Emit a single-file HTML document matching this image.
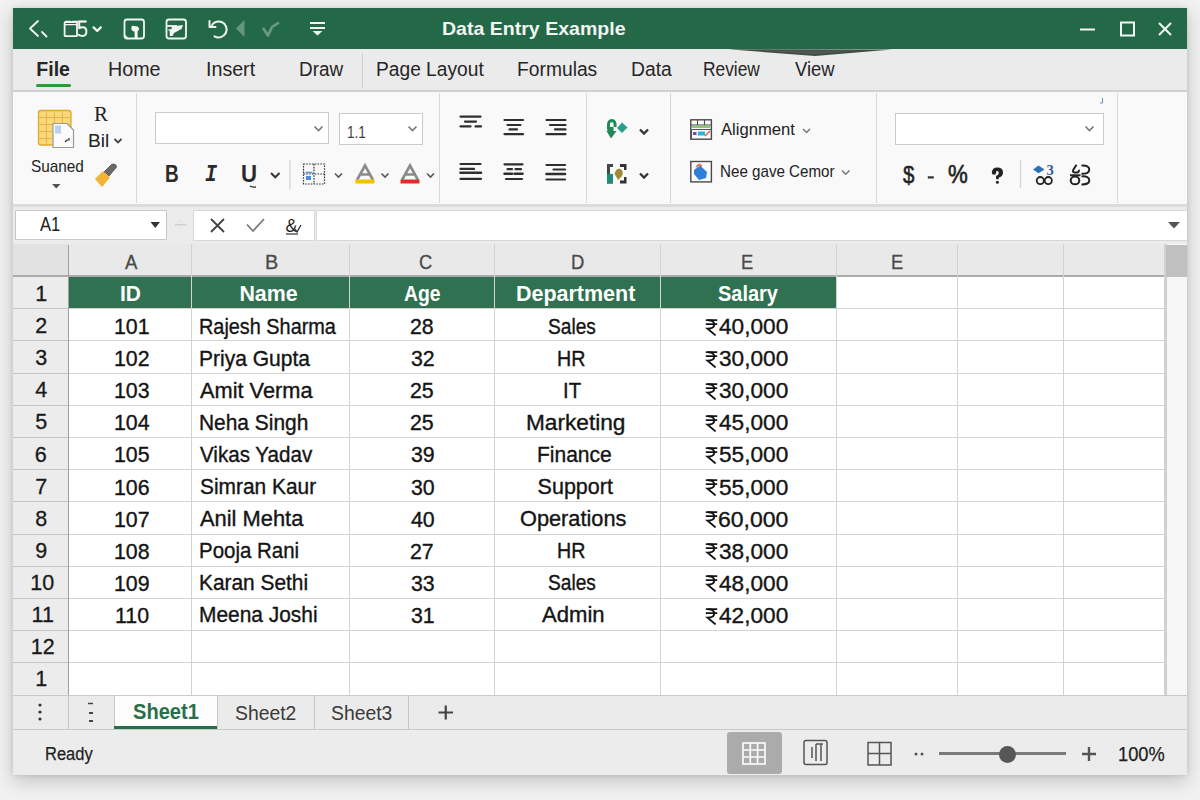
<!DOCTYPE html><html><head><meta charset="utf-8"><style>
*{margin:0;padding:0;box-sizing:border-box}
html,body{width:1200px;height:800px;overflow:hidden}
body{background:#f1f1f1;font-family:"Liberation Sans",sans-serif;position:relative;color:#1f1f1f}
.a{position:absolute}
.t{position:absolute;white-space:pre;line-height:1;transform-origin:0 0}
.sep{position:absolute;width:1px;background:#d8d8d8}
.box{position:absolute;background:#fff;border:1px solid #c4c4c4}
</style></head><body>
<div class="a" style="left:13px;top:8px;width:1174px;height:767px;background:#ececec;box-shadow:0 6px 18px rgba(0,0,0,0.20),0 0 5px rgba(0,0,0,0.10)"></div>
<div class="a" style="left:13px;top:8px;width:1174px;height:41px;background:#236948;"></div>
<div class="a" style="left:13px;top:49px;width:1174px;height:42px;background:#ebebeb;"></div>
<div class="a" style="left:13px;top:90px;width:1174px;height:1.5px;background:#d0d0d0;"></div>
<div class="a" style="left:36px;top:83.5px;width:35px;height:3.8px;background:#2c9c3a;border-radius:2px"></div>
<div class="sep" style="left:362px;top:53px;height:35px;background:#d0d0d0"></div>
<div class="a" style="left:13px;top:91.5px;width:1174px;height:113px;background:#f9f9f9;"></div>
<div class="a" style="left:13px;top:204px;width:1174px;height:3px;background:#dcdcdc;"></div>
<div class="sep" style="left:135.5px;top:93px;height:110px"></div>
<div class="sep" style="left:438.5px;top:93px;height:110px"></div>
<div class="sep" style="left:586.0px;top:93px;height:110px"></div>
<div class="sep" style="left:669.5px;top:93px;height:110px"></div>
<div class="sep" style="left:875.5px;top:93px;height:110px"></div>
<div class="sep" style="left:1117.0px;top:93px;height:110px"></div>
<div class="box" style="left:155px;top:112px;width:174px;height:32px;border-color:#cbcbcb"></div>
<div class="box" style="left:339px;top:113px;width:84px;height:32px;border-color:#cbcbcb"></div>
<div class="box" style="left:895px;top:112.5px;width:209px;height:32px;border-color:#cbcbcb"></div>
<div class="a" style="left:13px;top:207px;width:1174px;height:37px;background:#ececec;"></div>
<div class="box" style="left:15px;top:210px;width:152px;height:30px;border-color:#c8c8c8"></div>
<div class="box" style="left:193px;top:210px;width:122px;height:31px;border-color:#d8d8d8"></div>
<div class="box" style="left:316px;top:210px;width:871px;height:31px;border-color:#d8d8d8;border-right:none"></div>
<div class="a" style="left:13px;top:244px;width:1152px;height:451.1px;background:#ffffff;"></div>
<div class="a" style="left:13px;top:244px;width:1152px;height:32.5px;background:#e9e9e9;"></div>
<div class="a" style="left:13px;top:244px;width:55.5px;height:32.5px;background:#e2e2e2;"></div>
<div class="a" style="left:13px;top:276.5px;width:55.5px;height:418.6px;background:#ececec;"></div>
<div class="a" style="left:68.5px;top:276.5px;width:768.0px;height:32.7px;background:#2f7150;"></div>
<div class="a" style="left:13px;top:308px;width:1152px;height:1px;background:#d3d3d3;"></div>
<div class="a" style="left:13px;top:340px;width:1152px;height:1px;background:#d3d3d3;"></div>
<div class="a" style="left:13px;top:373px;width:1152px;height:1px;background:#d3d3d3;"></div>
<div class="a" style="left:13px;top:405px;width:1152px;height:1px;background:#d3d3d3;"></div>
<div class="a" style="left:13px;top:437px;width:1152px;height:1px;background:#d3d3d3;"></div>
<div class="a" style="left:13px;top:469px;width:1152px;height:1px;background:#d3d3d3;"></div>
<div class="a" style="left:13px;top:501px;width:1152px;height:1px;background:#d3d3d3;"></div>
<div class="a" style="left:13px;top:534px;width:1152px;height:1px;background:#d3d3d3;"></div>
<div class="a" style="left:13px;top:566px;width:1152px;height:1px;background:#d3d3d3;"></div>
<div class="a" style="left:13px;top:598px;width:1152px;height:1px;background:#d3d3d3;"></div>
<div class="a" style="left:13px;top:630px;width:1152px;height:1px;background:#d3d3d3;"></div>
<div class="a" style="left:13px;top:662px;width:1152px;height:1px;background:#d3d3d3;"></div>
<div class="a" style="left:13px;top:695px;width:1152px;height:1px;background:#d3d3d3;"></div>
<div class="a" style="left:13px;top:308px;width:55.5px;height:1px;background:#c4c4c4;"></div>
<div class="a" style="left:13px;top:340px;width:55.5px;height:1px;background:#c4c4c4;"></div>
<div class="a" style="left:13px;top:373px;width:55.5px;height:1px;background:#c4c4c4;"></div>
<div class="a" style="left:13px;top:405px;width:55.5px;height:1px;background:#c4c4c4;"></div>
<div class="a" style="left:13px;top:437px;width:55.5px;height:1px;background:#c4c4c4;"></div>
<div class="a" style="left:13px;top:469px;width:55.5px;height:1px;background:#c4c4c4;"></div>
<div class="a" style="left:13px;top:501px;width:55.5px;height:1px;background:#c4c4c4;"></div>
<div class="a" style="left:13px;top:534px;width:55.5px;height:1px;background:#c4c4c4;"></div>
<div class="a" style="left:13px;top:566px;width:55.5px;height:1px;background:#c4c4c4;"></div>
<div class="a" style="left:13px;top:598px;width:55.5px;height:1px;background:#c4c4c4;"></div>
<div class="a" style="left:13px;top:630px;width:55.5px;height:1px;background:#c4c4c4;"></div>
<div class="a" style="left:13px;top:662px;width:55.5px;height:1px;background:#c4c4c4;"></div>
<div class="a" style="left:13px;top:695px;width:55.5px;height:1px;background:#c4c4c4;"></div>
<div class="a" style="left:13px;top:275.0px;width:1152px;height:1.5px;background:#ababab;"></div>
<div class="a" style="left:191px;top:244px;width:1px;height:451.1px;background:#d3d3d3;"></div>
<div class="a" style="left:349px;top:244px;width:1px;height:451.1px;background:#d3d3d3;"></div>
<div class="a" style="left:494px;top:244px;width:1px;height:451.1px;background:#d3d3d3;"></div>
<div class="a" style="left:660px;top:244px;width:1px;height:451.1px;background:#d3d3d3;"></div>
<div class="a" style="left:836px;top:244px;width:1px;height:451.1px;background:#d3d3d3;"></div>
<div class="a" style="left:957px;top:244px;width:1px;height:451.1px;background:#d3d3d3;"></div>
<div class="a" style="left:1063px;top:244px;width:1px;height:451.1px;background:#d3d3d3;"></div>
<div class="a" style="left:1164px;top:244px;width:1px;height:451.1px;background:#d3d3d3;"></div>
<div class="a" style="left:68px;top:245px;width:1px;height:450.1px;background:#a0a0a0;"></div>
<svg class="a" style="left:705px;top:318.8px" width="13" height="17" viewBox="0 0 13 17"><path d="M0.8 1.2 H12.2 M0.8 5.2 H12.2" stroke="#141414" stroke-width="1.7" fill="none"/><path d="M3.2 1.2 Q9.2 1.2 9.2 5.4 Q9.2 9.6 2.6 9.6 L10.6 16.4" stroke="#141414" stroke-width="1.9" fill="none"/></svg>
<svg class="a" style="left:705px;top:350.9px" width="13" height="17" viewBox="0 0 13 17"><path d="M0.8 1.2 H12.2 M0.8 5.2 H12.2" stroke="#141414" stroke-width="1.7" fill="none"/><path d="M3.2 1.2 Q9.2 1.2 9.2 5.4 Q9.2 9.6 2.6 9.6 L10.6 16.4" stroke="#141414" stroke-width="1.9" fill="none"/></svg>
<svg class="a" style="left:705px;top:383.0px" width="13" height="17" viewBox="0 0 13 17"><path d="M0.8 1.2 H12.2 M0.8 5.2 H12.2" stroke="#141414" stroke-width="1.7" fill="none"/><path d="M3.2 1.2 Q9.2 1.2 9.2 5.4 Q9.2 9.6 2.6 9.6 L10.6 16.4" stroke="#141414" stroke-width="1.9" fill="none"/></svg>
<svg class="a" style="left:705px;top:415.0px" width="13" height="17" viewBox="0 0 13 17"><path d="M0.8 1.2 H12.2 M0.8 5.2 H12.2" stroke="#141414" stroke-width="1.7" fill="none"/><path d="M3.2 1.2 Q9.2 1.2 9.2 5.4 Q9.2 9.6 2.6 9.6 L10.6 16.4" stroke="#141414" stroke-width="1.9" fill="none"/></svg>
<svg class="a" style="left:705px;top:447.1px" width="13" height="17" viewBox="0 0 13 17"><path d="M0.8 1.2 H12.2 M0.8 5.2 H12.2" stroke="#141414" stroke-width="1.7" fill="none"/><path d="M3.2 1.2 Q9.2 1.2 9.2 5.4 Q9.2 9.6 2.6 9.6 L10.6 16.4" stroke="#141414" stroke-width="1.9" fill="none"/></svg>
<svg class="a" style="left:705px;top:479.2px" width="13" height="17" viewBox="0 0 13 17"><path d="M0.8 1.2 H12.2 M0.8 5.2 H12.2" stroke="#141414" stroke-width="1.7" fill="none"/><path d="M3.2 1.2 Q9.2 1.2 9.2 5.4 Q9.2 9.6 2.6 9.6 L10.6 16.4" stroke="#141414" stroke-width="1.9" fill="none"/></svg>
<svg class="a" style="left:705px;top:511.3px" width="13" height="17" viewBox="0 0 13 17"><path d="M0.8 1.2 H12.2 M0.8 5.2 H12.2" stroke="#141414" stroke-width="1.7" fill="none"/><path d="M3.2 1.2 Q9.2 1.2 9.2 5.4 Q9.2 9.6 2.6 9.6 L10.6 16.4" stroke="#141414" stroke-width="1.9" fill="none"/></svg>
<svg class="a" style="left:705px;top:543.4px" width="13" height="17" viewBox="0 0 13 17"><path d="M0.8 1.2 H12.2 M0.8 5.2 H12.2" stroke="#141414" stroke-width="1.7" fill="none"/><path d="M3.2 1.2 Q9.2 1.2 9.2 5.4 Q9.2 9.6 2.6 9.6 L10.6 16.4" stroke="#141414" stroke-width="1.9" fill="none"/></svg>
<svg class="a" style="left:705px;top:575.4px" width="13" height="17" viewBox="0 0 13 17"><path d="M0.8 1.2 H12.2 M0.8 5.2 H12.2" stroke="#141414" stroke-width="1.7" fill="none"/><path d="M3.2 1.2 Q9.2 1.2 9.2 5.4 Q9.2 9.6 2.6 9.6 L10.6 16.4" stroke="#141414" stroke-width="1.9" fill="none"/></svg>
<svg class="a" style="left:705px;top:607.5px" width="13" height="17" viewBox="0 0 13 17"><path d="M0.8 1.2 H12.2 M0.8 5.2 H12.2" stroke="#141414" stroke-width="1.7" fill="none"/><path d="M3.2 1.2 Q9.2 1.2 9.2 5.4 Q9.2 9.6 2.6 9.6 L10.6 16.4" stroke="#141414" stroke-width="1.9" fill="none"/></svg>
<div class="a" style="left:1165px;top:244px;width:22px;height:451.1px;background:#f6f6f6;border-left:2px solid #d0d0d0"></div>
<div class="a" style="left:1166px;top:245px;width:21px;height:32px;background:#c0c0c0;"></div>
<div class="a" style="left:13px;top:694.5px;width:1174px;height:34.5px;background:#ebebeb;"></div>
<div class="a" style="left:13px;top:694.5px;width:1174px;height:1.2px;background:#c9c9c9;"></div>
<div class="a" style="left:13px;top:728.5px;width:1174px;height:1.2px;background:#c9c9c9;"></div>
<div class="a" style="left:114px;top:695.5px;width:103px;height:33px;background:#fdfdfd;"></div>
<div class="sep" style="left:68.3px;top:695px;height:34px;background:#c6c6c6"></div>
<div class="sep" style="left:113.5px;top:695px;height:34px;background:#c6c6c6"></div>
<div class="sep" style="left:217.0px;top:695px;height:34px;background:#c6c6c6"></div>
<div class="sep" style="left:314.1px;top:695px;height:34px;background:#c6c6c6"></div>
<div class="sep" style="left:408.25px;top:695px;height:34px;background:#c6c6c6"></div>
<div class="a" style="left:114px;top:725.8px;width:103px;height:3.4px;background:#24704a;"></div>
<path/>
<div class="a" style="left:727px;top:732px;width:55px;height:42px;background:#ababab;border-radius:3px"></div>
<div class="a" style="left:939px;top:752px;width:127px;height:3px;background:#7a7a7a;"></div>
<div class="a" style="left:998.5px;top:746px;width:17px;height:17px;border-radius:50%;background:#575757"></div>
<div class="t" style="left:441.55px;top:19.65px;font:normal 700 18.6px 'Liberation Sans';line-height:1;color:#f2f5f2;transform:scaleX(1.0508);">Data Entry Example</div>
<div class="t" style="left:36.30px;top:60.19px;font:normal 700 19.5px 'Liberation Sans';line-height:1;color:#262626;">File</div>
<div class="t" style="left:108.29px;top:60.19px;font:normal 400 19.5px 'Liberation Sans';line-height:1;color:#262626;transform:scaleX(1.0105);">Home</div>
<div class="t" style="left:206.29px;top:60.19px;font:normal 400 19.5px 'Liberation Sans';line-height:1;color:#262626;transform:scaleX(1.0072);">Insert</div>
<div class="t" style="left:299.03px;top:60.19px;font:normal 400 19.5px 'Liberation Sans';line-height:1;color:#262626;transform:scaleX(0.9687);">Draw</div>
<div class="t" style="left:375.72px;top:60.19px;font:normal 400 19.5px 'Liberation Sans';line-height:1;color:#262626;transform:scaleX(0.9836);">Page Layout</div>
<div class="t" style="left:517.01px;top:60.19px;font:normal 400 19.5px 'Liberation Sans';line-height:1;color:#262626;transform:scaleX(0.9874);">Formulas</div>
<div class="t" style="left:630.71px;top:60.19px;font:normal 400 19.5px 'Liberation Sans';line-height:1;color:#262626;transform:scaleX(0.9914);">Data</div>
<div class="t" style="left:703.11px;top:60.19px;font:normal 400 19.5px 'Liberation Sans';line-height:1;color:#262626;transform:scaleX(0.8895);">Review</div>
<div class="t" style="left:795.40px;top:60.19px;font:normal 400 19.5px 'Liberation Sans';line-height:1;color:#262626;transform:scaleX(0.9432);">View</div>
<div class="t" style="left:87.99px;top:130.71px;font:normal 400 19px 'Liberation Sans';line-height:1;color:#222;transform:scaleX(1.0056);">Bil</div>
<div class="t" style="left:30.50px;top:158.51px;font:normal 400 15.7px 'Liberation Sans';line-height:1;color:#222;transform:scaleX(0.9782);">Suaned</div>
<div class="t" style="left:347.17px;top:123.61px;font:normal 400 16.4px 'Liberation Sans';line-height:1;color:#444;transform:scaleX(0.8307);">1.1</div>
<div class="t" style="left:165.20px;top:161.85px;font:normal 700 23.8px 'Liberation Sans';line-height:1;color:#2a2a2a;transform:scaleX(0.7969);">B</div>
<div class="t" style="left:204.75px;top:164.37px;font:italic 700 23px 'Liberation Mono';line-height:1;color:#2a2a2a;transform:scaleX(0.8750);">I</div>
<div class="t" style="left:241.07px;top:161.85px;font:normal 700 23.8px 'Liberation Sans';line-height:1;color:#2a2a2a;transform:scaleX(0.9333);">U</div>
<div class="t" style="left:721.00px;top:121.02px;font:normal 400 17.4px 'Liberation Sans';line-height:1;color:#222;transform:scaleX(0.9548);">Alignment</div>
<div class="t" style="left:720.11px;top:163.10px;font:normal 400 17px 'Liberation Sans';line-height:1;color:#222;transform:scaleX(0.8917);">Nee gave Cemor</div>
<div class="t" style="left:902.70px;top:163.18px;font:normal 400 24px 'Liberation Sans';line-height:1;color:#222;transform:scaleX(0.8538);-webkit-text-stroke:0.5px #222">$</div>
<div class="t" style="left:948.00px;top:162.03px;font:normal 400 25px 'Liberation Sans';line-height:1;color:#222;transform:scaleX(0.8909);-webkit-text-stroke:0.6px #222">%</div>
<div class="t" style="left:39.75px;top:214.65px;font:normal 400 19.6px 'Liberation Sans';line-height:1;color:#222;transform:scaleX(0.8453);">A1</div>
<div class="t" style="left:125.00px;top:251.56px;font:normal 400 20px 'Liberation Sans';line-height:1;color:#4a4a4a;transform:scaleX(0.9286);-webkit-text-stroke:0.3px #4a4a4a">A</div>
<div class="t" style="left:264.71px;top:251.56px;font:normal 400 20px 'Liberation Sans';line-height:1;color:#4a4a4a;transform:scaleX(0.9917);-webkit-text-stroke:0.3px #4a4a4a">B</div>
<div class="t" style="left:418.88px;top:251.56px;font:normal 400 20px 'Liberation Sans';line-height:1;color:#4a4a4a;transform:scaleX(0.9154);-webkit-text-stroke:0.3px #4a4a4a">C</div>
<div class="t" style="left:571.08px;top:251.56px;font:normal 400 20px 'Liberation Sans';line-height:1;color:#4a4a4a;transform:scaleX(0.9231);-webkit-text-stroke:0.3px #4a4a4a">D</div>
<div class="t" style="left:741.08px;top:251.56px;font:normal 400 20px 'Liberation Sans';line-height:1;color:#4a4a4a;transform:scaleX(0.9167);-webkit-text-stroke:0.3px #4a4a4a">E</div>
<div class="t" style="left:891.08px;top:251.56px;font:normal 400 20px 'Liberation Sans';line-height:1;color:#4a4a4a;transform:scaleX(0.9167);-webkit-text-stroke:0.3px #4a4a4a">E</div>
<div class="t" style="left:35.25px;top:284.09px;font:normal 400 21.5px 'Liberation Sans';line-height:1;color:#1a1a1a;-webkit-text-stroke:0.3px #1a1a1a">1</div>
<div class="t" style="left:35.25px;top:316.19px;font:normal 400 21.5px 'Liberation Sans';line-height:1;color:#1a1a1a;-webkit-text-stroke:0.3px #1a1a1a">2</div>
<div class="t" style="left:35.25px;top:348.29px;font:normal 400 21.5px 'Liberation Sans';line-height:1;color:#1a1a1a;-webkit-text-stroke:0.3px #1a1a1a">3</div>
<div class="t" style="left:35.25px;top:380.39px;font:normal 400 21.5px 'Liberation Sans';line-height:1;color:#1a1a1a;-webkit-text-stroke:0.3px #1a1a1a">4</div>
<div class="t" style="left:35.25px;top:412.49px;font:normal 400 21.5px 'Liberation Sans';line-height:1;color:#1a1a1a;-webkit-text-stroke:0.3px #1a1a1a">5</div>
<div class="t" style="left:34.75px;top:444.59px;font:normal 400 21.5px 'Liberation Sans';line-height:1;color:#1a1a1a;-webkit-text-stroke:0.3px #1a1a1a">6</div>
<div class="t" style="left:35.25px;top:476.69px;font:normal 400 21.5px 'Liberation Sans';line-height:1;color:#1a1a1a;-webkit-text-stroke:0.3px #1a1a1a">7</div>
<div class="t" style="left:35.25px;top:508.79px;font:normal 400 21.5px 'Liberation Sans';line-height:1;color:#1a1a1a;-webkit-text-stroke:0.3px #1a1a1a">8</div>
<div class="t" style="left:35.25px;top:540.89px;font:normal 400 21.5px 'Liberation Sans';line-height:1;color:#1a1a1a;-webkit-text-stroke:0.3px #1a1a1a">9</div>
<div class="t" style="left:30.27px;top:572.99px;font:normal 400 21.5px 'Liberation Sans';line-height:1;color:#1a1a1a;-webkit-text-stroke:0.3px #1a1a1a">10</div>
<div class="t" style="left:31.57px;top:605.09px;font:normal 400 21.5px 'Liberation Sans';line-height:1;color:#1a1a1a;-webkit-text-stroke:0.3px #1a1a1a">11</div>
<div class="t" style="left:30.77px;top:637.19px;font:normal 400 21.5px 'Liberation Sans';line-height:1;color:#1a1a1a;-webkit-text-stroke:0.3px #1a1a1a">12</div>
<div class="t" style="left:35.25px;top:669.29px;font:normal 400 21.5px 'Liberation Sans';line-height:1;color:#1a1a1a;-webkit-text-stroke:0.3px #1a1a1a">1</div>
<div class="t" style="left:119.52px;top:284.18px;font:normal 700 21.4px 'Liberation Sans';line-height:1;color:#ffffff;transform:scaleX(0.9778);">ID</div>
<div class="t" style="left:239.40px;top:284.18px;font:normal 700 21.4px 'Liberation Sans';line-height:1;color:#ffffff;">Name</div>
<div class="t" style="left:403.60px;top:284.18px;font:normal 700 21.4px 'Liberation Sans';line-height:1;color:#ffffff;transform:scaleX(0.9059);">Age</div>
<div class="t" style="left:516.40px;top:284.18px;font:normal 700 21.4px 'Liberation Sans';line-height:1;color:#ffffff;transform:scaleX(1.0039);">Department</div>
<div class="t" style="left:718.00px;top:284.18px;font:normal 700 21.4px 'Liberation Sans';line-height:1;color:#ffffff;transform:scaleX(0.9327);">Salary</div>
<div class="t" style="left:113.83px;top:316.17px;font:normal 400 22px 'Liberation Sans';line-height:1;color:#141414;transform:scaleX(0.9700);-webkit-text-stroke:0.35px #141414">101</div>
<div class="t" style="left:198.68px;top:316.59px;font:normal 400 21.5px 'Liberation Sans';line-height:1;color:#141414;transform:scaleX(0.9238);-webkit-text-stroke:0.35px #141414">Rajesh Sharma</div>
<div class="t" style="left:410.36px;top:316.17px;font:normal 400 22px 'Liberation Sans';line-height:1;color:#141414;transform:scaleX(0.9700);-webkit-text-stroke:0.35px #141414">28</div>
<div class="t" style="left:548.40px;top:316.59px;font:normal 400 21.5px 'Liberation Sans';line-height:1;color:#141414;transform:scaleX(0.8900);-webkit-text-stroke:0.35px #141414">Sales</div>
<div class="t" style="left:719.00px;top:316.17px;font:normal 400 22px 'Liberation Sans';line-height:1;color:#141414;transform:scaleX(1.0290);-webkit-text-stroke:0.35px #141414">40,000</div>
<div class="t" style="left:113.83px;top:348.25px;font:normal 400 22px 'Liberation Sans';line-height:1;color:#141414;transform:scaleX(0.9700);-webkit-text-stroke:0.35px #141414">102</div>
<div class="t" style="left:198.62px;top:348.67px;font:normal 400 21.5px 'Liberation Sans';line-height:1;color:#141414;transform:scaleX(0.9772);-webkit-text-stroke:0.35px #141414">Priya Gupta</div>
<div class="t" style="left:410.85px;top:348.25px;font:normal 400 22px 'Liberation Sans';line-height:1;color:#141414;transform:scaleX(0.9700);-webkit-text-stroke:0.35px #141414">32</div>
<div class="t" style="left:557.09px;top:348.67px;font:normal 400 21.5px 'Liberation Sans';line-height:1;color:#141414;transform:scaleX(0.9144);-webkit-text-stroke:0.35px #141414">HR</div>
<div class="t" style="left:719.00px;top:348.25px;font:normal 400 22px 'Liberation Sans';line-height:1;color:#141414;transform:scaleX(1.0290);-webkit-text-stroke:0.35px #141414">30,000</div>
<div class="t" style="left:113.83px;top:380.33px;font:normal 400 22px 'Liberation Sans';line-height:1;color:#141414;transform:scaleX(0.9700);-webkit-text-stroke:0.35px #141414">103</div>
<div class="t" style="left:199.60px;top:380.75px;font:normal 400 21.5px 'Liberation Sans';line-height:1;color:#141414;transform:scaleX(1.0130);-webkit-text-stroke:0.35px #141414">Amit Verma</div>
<div class="t" style="left:410.36px;top:380.33px;font:normal 400 22px 'Liberation Sans';line-height:1;color:#141414;transform:scaleX(0.9700);-webkit-text-stroke:0.35px #141414">25</div>
<div class="t" style="left:563.05px;top:380.75px;font:normal 400 21.5px 'Liberation Sans';line-height:1;color:#141414;transform:scaleX(0.9458);-webkit-text-stroke:0.35px #141414">IT</div>
<div class="t" style="left:719.00px;top:380.33px;font:normal 400 22px 'Liberation Sans';line-height:1;color:#141414;transform:scaleX(1.0290);-webkit-text-stroke:0.35px #141414">30,000</div>
<div class="t" style="left:113.83px;top:412.41px;font:normal 400 22px 'Liberation Sans';line-height:1;color:#141414;transform:scaleX(0.9700);-webkit-text-stroke:0.35px #141414">104</div>
<div class="t" style="left:198.63px;top:412.83px;font:normal 400 21.5px 'Liberation Sans';line-height:1;color:#141414;transform:scaleX(0.9728);-webkit-text-stroke:0.35px #141414">Neha Singh</div>
<div class="t" style="left:410.36px;top:412.41px;font:normal 400 22px 'Liberation Sans';line-height:1;color:#141414;transform:scaleX(0.9700);-webkit-text-stroke:0.35px #141414">25</div>
<div class="t" style="left:525.95px;top:412.83px;font:normal 400 21.5px 'Liberation Sans';line-height:1;color:#141414;transform:scaleX(1.0536);-webkit-text-stroke:0.35px #141414">Marketing</div>
<div class="t" style="left:719.00px;top:412.41px;font:normal 400 22px 'Liberation Sans';line-height:1;color:#141414;transform:scaleX(1.0290);-webkit-text-stroke:0.35px #141414">45,000</div>
<div class="t" style="left:113.83px;top:444.49px;font:normal 400 22px 'Liberation Sans';line-height:1;color:#141414;transform:scaleX(0.9700);-webkit-text-stroke:0.35px #141414">105</div>
<div class="t" style="left:199.60px;top:444.91px;font:normal 400 21.5px 'Liberation Sans';line-height:1;color:#141414;transform:scaleX(0.9578);-webkit-text-stroke:0.35px #141414">Vikas Yadav</div>
<div class="t" style="left:410.85px;top:444.49px;font:normal 400 22px 'Liberation Sans';line-height:1;color:#141414;transform:scaleX(0.9700);-webkit-text-stroke:0.35px #141414">39</div>
<div class="t" style="left:536.62px;top:444.91px;font:normal 400 21.5px 'Liberation Sans';line-height:1;color:#141414;transform:scaleX(0.9768);-webkit-text-stroke:0.35px #141414">Finance</div>
<div class="t" style="left:719.00px;top:444.49px;font:normal 400 22px 'Liberation Sans';line-height:1;color:#141414;transform:scaleX(1.0290);-webkit-text-stroke:0.35px #141414">55,000</div>
<div class="t" style="left:113.83px;top:476.57px;font:normal 400 22px 'Liberation Sans';line-height:1;color:#141414;transform:scaleX(0.9700);-webkit-text-stroke:0.35px #141414">106</div>
<div class="t" style="left:199.60px;top:476.99px;font:normal 400 21.5px 'Liberation Sans';line-height:1;color:#141414;transform:scaleX(0.9721);-webkit-text-stroke:0.35px #141414">Simran Kaur</div>
<div class="t" style="left:410.85px;top:476.57px;font:normal 400 22px 'Liberation Sans';line-height:1;color:#141414;transform:scaleX(0.9700);-webkit-text-stroke:0.35px #141414">30</div>
<div class="t" style="left:537.60px;top:476.99px;font:normal 400 21.5px 'Liberation Sans';line-height:1;color:#141414;-webkit-text-stroke:0.35px #141414">Support</div>
<div class="t" style="left:719.00px;top:476.57px;font:normal 400 22px 'Liberation Sans';line-height:1;color:#141414;transform:scaleX(1.0290);-webkit-text-stroke:0.35px #141414">55,000</div>
<div class="t" style="left:113.83px;top:508.65px;font:normal 400 22px 'Liberation Sans';line-height:1;color:#141414;transform:scaleX(0.9700);-webkit-text-stroke:0.35px #141414">107</div>
<div class="t" style="left:199.60px;top:509.07px;font:normal 400 21.5px 'Liberation Sans';line-height:1;color:#141414;transform:scaleX(1.0175);-webkit-text-stroke:0.35px #141414">Anil Mehta</div>
<div class="t" style="left:410.85px;top:508.65px;font:normal 400 22px 'Liberation Sans';line-height:1;color:#141414;transform:scaleX(0.9700);-webkit-text-stroke:0.35px #141414">40</div>
<div class="t" style="left:519.99px;top:509.07px;font:normal 400 21.5px 'Liberation Sans';line-height:1;color:#141414;transform:scaleX(1.0114);-webkit-text-stroke:0.35px #141414">Operations</div>
<div class="t" style="left:717.96px;top:508.65px;font:normal 400 22px 'Liberation Sans';line-height:1;color:#141414;transform:scaleX(1.0446);-webkit-text-stroke:0.35px #141414">60,000</div>
<div class="t" style="left:113.83px;top:540.73px;font:normal 400 22px 'Liberation Sans';line-height:1;color:#141414;transform:scaleX(0.9700);-webkit-text-stroke:0.35px #141414">108</div>
<div class="t" style="left:198.65px;top:541.15px;font:normal 400 21.5px 'Liberation Sans';line-height:1;color:#141414;transform:scaleX(0.9516);-webkit-text-stroke:0.35px #141414">Pooja Rani</div>
<div class="t" style="left:410.36px;top:540.73px;font:normal 400 22px 'Liberation Sans';line-height:1;color:#141414;transform:scaleX(0.9700);-webkit-text-stroke:0.35px #141414">27</div>
<div class="t" style="left:557.09px;top:541.15px;font:normal 400 21.5px 'Liberation Sans';line-height:1;color:#141414;transform:scaleX(0.9144);-webkit-text-stroke:0.35px #141414">HR</div>
<div class="t" style="left:719.00px;top:540.73px;font:normal 400 22px 'Liberation Sans';line-height:1;color:#141414;transform:scaleX(1.0290);-webkit-text-stroke:0.35px #141414">38,000</div>
<div class="t" style="left:113.83px;top:572.81px;font:normal 400 22px 'Liberation Sans';line-height:1;color:#141414;transform:scaleX(0.9700);-webkit-text-stroke:0.35px #141414">109</div>
<div class="t" style="left:198.63px;top:573.23px;font:normal 400 21.5px 'Liberation Sans';line-height:1;color:#141414;transform:scaleX(0.9713);-webkit-text-stroke:0.35px #141414">Karan Sethi</div>
<div class="t" style="left:410.85px;top:572.81px;font:normal 400 22px 'Liberation Sans';line-height:1;color:#141414;transform:scaleX(0.9700);-webkit-text-stroke:0.35px #141414">33</div>
<div class="t" style="left:548.40px;top:573.23px;font:normal 400 21.5px 'Liberation Sans';line-height:1;color:#141414;transform:scaleX(0.8900);-webkit-text-stroke:0.35px #141414">Sales</div>
<div class="t" style="left:719.00px;top:572.81px;font:normal 400 22px 'Liberation Sans';line-height:1;color:#141414;transform:scaleX(1.0290);-webkit-text-stroke:0.35px #141414">48,000</div>
<div class="t" style="left:114.62px;top:604.89px;font:normal 400 22px 'Liberation Sans';line-height:1;color:#141414;transform:scaleX(0.9700);-webkit-text-stroke:0.35px #141414">110</div>
<div class="t" style="left:198.63px;top:605.31px;font:normal 400 21.5px 'Liberation Sans';line-height:1;color:#141414;transform:scaleX(0.9723);-webkit-text-stroke:0.35px #141414">Meena Joshi</div>
<div class="t" style="left:410.85px;top:604.89px;font:normal 400 22px 'Liberation Sans';line-height:1;color:#141414;transform:scaleX(0.9700);-webkit-text-stroke:0.35px #141414">31</div>
<div class="t" style="left:542.40px;top:605.31px;font:normal 400 21.5px 'Liberation Sans';line-height:1;color:#141414;transform:scaleX(1.0269);-webkit-text-stroke:0.35px #141414">Admin</div>
<div class="t" style="left:719.00px;top:604.89px;font:normal 400 22px 'Liberation Sans';line-height:1;color:#141414;transform:scaleX(1.0290);-webkit-text-stroke:0.35px #141414">42,000</div>
<div class="t" style="left:132.70px;top:701.37px;font:normal 700 22px 'Liberation Sans';line-height:1;color:#277049;transform:scaleX(0.9123);">Sheet1</div>
<div class="t" style="left:235.20px;top:703.01px;font:normal 400 20.3px 'Liberation Sans';line-height:1;color:#393939;transform:scaleX(0.9539);">Sheet2</div>
<div class="t" style="left:331.00px;top:703.01px;font:normal 400 20.3px 'Liberation Sans';line-height:1;color:#393939;transform:scaleX(0.9531);">Sheet3</div>
<div class="t" style="left:44.83px;top:744.70px;font:normal 400 18.9px 'Liberation Sans';line-height:1;color:#1e1e1e;transform:scaleX(0.8733);-webkit-text-stroke:0.25px #1e1e1e">Ready</div>
<div class="t" style="left:1118.07px;top:744.62px;font:normal 400 19.7px 'Liberation Sans';line-height:1;color:#1e1e1e;transform:scaleX(0.9274);-webkit-text-stroke:0.25px #1e1e1e">100%</div>
<svg class="a" style="left:0;top:0" width="1200" height="800" viewBox="0 0 1200 800"><g fill="none" stroke="#f3f6f3" stroke-width="1.8" stroke-linecap="round" stroke-linejoin="round">
<path d="M38 21 L30 28.5 L38 36"/><path d="M42 32 L46.5 36.5"/>
<rect x="64.6" y="22.2" width="12.4" height="14" rx="0.8"/><path d="M64.6 24.6 H77" stroke-width="1.3"/><path d="M65.5 21.6 H70.5 M72.5 21.6 H85.8" stroke-width="1.5"/>
<path d="M85.8 21.6 H79.2 V28.2 Q80.3 27.2 82.6 27.2 Q86.4 27.2 86.4 31.5 Q86.4 35.9 82.4 35.9 Q80.2 35.9 78.6 34.9" stroke-width="2"/>
<path d="M93.6 27.4 L97.2 31 L100.8 27.4" stroke-width="2.3"/>
<rect x="124.5" y="19.5" width="19.5" height="19" rx="2.5"/>
<path d="M125 36 L127 38"/>
</g>
<path d="M131.4 27.2 Q131.8 25.6 134.2 25.9 L137.6 26.4 Q139.4 27.4 139 30 L137.6 31.2 V38.4 H134.6 V31.6 Q131.4 31.2 131.4 28.6 Z" fill="#f3f6f3"/>
<g fill="none" stroke="#f3f6f3" stroke-width="1.8" stroke-linejoin="round"><rect x="166.5" y="19.5" width="19.5" height="19" rx="2.5"/><path d="M167 26 H177"/></g>
<path d="M172 26.5 L183 25 L181.5 29 L174 33 L172.5 36 L170.5 36 L171 31.5 Z" fill="#f3f6f3"/><path d="M168.5 30 H173 M170.5 30 V36" stroke="#f3f6f3" stroke-width="1.5" fill="none"/>
<g fill="none" stroke="#f3f6f3" stroke-width="2" stroke-linecap="round" stroke-linejoin="round"><path d="M211 27 A8 8 0 1 1 214.5 36.3"/><path d="M209.5 21 V27 H215.5"/></g>
<path d="M244.5 20 L244.5 37 L236 28.5 Z" fill="#6f9f85" opacity="0.85"/>
<path d="M263 28 L268 35.5 L272 27 L279 22.5" fill="none" stroke="#6a9d80" stroke-width="2.6" stroke-linejoin="round"/>
<g stroke="#f3f6f3" stroke-width="1.8"><path d="M310 23 H325 M310 28 H325"/></g><path d="M312.5 31 H322.5 L317.5 35.5 Z" fill="#f3f6f3"/>
<g fill="none" stroke="#f3f6f3" stroke-width="2"><path d="M1080 29.5 H1095"/><rect x="1121" y="22.5" width="13" height="13"/><path d="M1159 23 L1171 35 M1171 23 L1159 35"/></g>
<path d="M728 49.3 L815 56 L892 49.6 Z" fill="#3f4c45"/><path d="M760 50.5 L815 54.5 L860 50.5 Z" fill="#56605a" opacity="0.6"/>
<rect x="38.5" y="110.5" width="32.5" height="34.5" rx="2.5" fill="#fad978" stroke="#e0a830" stroke-width="1.3"/>
<g stroke="#e9b84c" stroke-width="1.1">
<path d="M46.5 111 V144.5"/>
<path d="M54.5 111 V144.5"/>
<path d="M62.5 111 V144.5"/>
<path d="M39 117.5 H70.5"/>
<path d="M39 124.5 H70.5"/>
<path d="M39 131.5 H70.5"/>
<path d="M39 138.5 H70.5"/>
</g>
<path d="M53 123.5 H67 L73.5 130 V147.5 H53 Z" fill="#fbfbfb" stroke="#9a9a9a" stroke-width="1.2"/>
<rect x="55" y="125.5" width="6" height="8" fill="#b9d0f0"/>
<path d="M65 142 L67 140 H69 V138" fill="none" stroke="#333" stroke-width="1.2"/>
<text x="94" y="121" font-family="Liberation Serif" font-size="21" fill="#222">R</text>
<path d="M52 184 H60.5 L56.25 188.5 Z" fill="#555"/>
<path d="M104 172 L111.5 164.5 Q116 163 116.5 167 L109 176 Z" fill="#6a6a6a" stroke="#444" stroke-width="0.8"/>
<path d="M95 179 L103 171 L110 177.5 L102 187 Z" fill="#f5b335"/>
<path d="M314.5 126.5 L318.5 130.5 L322.5 126.5" fill="none" stroke="#777" stroke-width="1.6"/>
<path d="M408.5 126.5 L412.5 130.5 L416.5 126.5" fill="none" stroke="#777" stroke-width="1.6"/>
<path d="M114.5 139 L118.0 142.5 L121.5 139" fill="none" stroke="#444" stroke-width="1.8"/>
<path d="M271 173 L275.25 177.25 L279.5 173" fill="none" stroke="#333" stroke-width="2"/>
<path d="M335 173.5 L338.5 177.0 L342 173.5" fill="none" stroke="#555" stroke-width="1.6"/>
<path d="M381.5 173.5 L385.0 177.0 L388.5 173.5" fill="none" stroke="#555" stroke-width="1.6"/>
<path d="M427 173.5 L430.5 177.0 L434 173.5" fill="none" stroke="#555" stroke-width="1.6"/>
<path d="M250 186 Q253 187.5 256 187" stroke="#333" stroke-width="1.3" fill="none"/>
<g fill="none" stroke="#333" stroke-width="1.2" stroke-dasharray="1.6 1.2"><rect x="303.5" y="164" width="21" height="20"/><path d="M314 164 V184 M303.5 174 H324.5"/></g>
<path d="M305.5 172.5 H312.5" stroke="#4a90d9" stroke-width="1.4"/><rect x="306" y="176" width="5" height="4" fill="#4a90d9"/>
<path d="M357 180 L365 165.5 L373 180 M360.5 174.5 H369.5" fill="none" stroke="#8a8a8a" stroke-width="2.6"/>
<rect x="355.5" y="179.5" width="19" height="4" fill="#f2c200"/>
<path d="M402 180 L410 165.5 L418 180 M405.5 174.5 H414.5" fill="none" stroke="#8a8a8a" stroke-width="2.6"/>
<rect x="400.5" y="179.5" width="19" height="4" fill="#d9302c"/>
<path d="M460.5 116.6 H480.5" stroke="#2e2e2e" stroke-width="2.2" stroke-linecap="round"/>
<path d="M465 121.6 H476" stroke="#2e2e2e" stroke-width="2.2" stroke-linecap="round"/>
<path d="M460.5 126.4 H470.5" stroke="#2e2e2e" stroke-width="2.2" stroke-linecap="round"/>
<path d="M475.5 126.4 H481" stroke="#2e2e2e" stroke-width="2.2" stroke-linecap="round"/>
<path d="M504.5 120 H523" stroke="#2e2e2e" stroke-width="2.2" stroke-linecap="round"/>
<path d="M507.5 125 H520.5" stroke="#2e2e2e" stroke-width="2.2" stroke-linecap="round"/>
<path d="M509.5 129.4 H517" stroke="#2e2e2e" stroke-width="2.2" stroke-linecap="round"/>
<path d="M504.5 134.2 H523" stroke="#2e2e2e" stroke-width="2.2" stroke-linecap="round"/>
<path d="M546.5 120 H565.5" stroke="#2e2e2e" stroke-width="2.2" stroke-linecap="round"/>
<path d="M550 125 H565.5" stroke="#2e2e2e" stroke-width="2.2" stroke-linecap="round"/>
<path d="M555 129.4 H565.5" stroke="#2e2e2e" stroke-width="2.2" stroke-linecap="round"/>
<path d="M546.5 134.2 H565.5" stroke="#2e2e2e" stroke-width="2.2" stroke-linecap="round"/>
<path d="M460.5 164 H480.5" stroke="#2e2e2e" stroke-width="2.2" stroke-linecap="round"/>
<path d="M460.5 168.9 H474" stroke="#2e2e2e" stroke-width="2.2" stroke-linecap="round"/>
<path d="M460.5 172.8 H481" stroke="#2e2e2e" stroke-width="2.6" stroke-linecap="round"/>
<path d="M460.5 178.9 H481" stroke="#2e2e2e" stroke-width="2.2" stroke-linecap="round"/>
<path d="M504.5 164.3 H522.5" stroke="#2e2e2e" stroke-width="2.2" stroke-linecap="round"/>
<path d="M507.5 169.2 H512" stroke="#2e2e2e" stroke-width="2.2" stroke-linecap="round"/>
<path d="M515.5 169.2 H521" stroke="#2e2e2e" stroke-width="2.2" stroke-linecap="round"/>
<path d="M504.5 173.7 H512" stroke="#2e2e2e" stroke-width="2.5" stroke-linecap="round"/>
<path d="M514.5 173.7 H522.5" stroke="#2e2e2e" stroke-width="2.5" stroke-linecap="round"/>
<path d="M506 179 H522" stroke="#2e2e2e" stroke-width="2.2" stroke-linecap="round"/>
<path d="M546.5 165 H565" stroke="#2e2e2e" stroke-width="2.2" stroke-linecap="round"/>
<path d="M553.5 169.5 H565" stroke="#2e2e2e" stroke-width="2.2" stroke-linecap="round"/>
<path d="M546.5 174 H565" stroke="#2e2e2e" stroke-width="2.6" stroke-linecap="round"/>
<path d="M546.5 179.5 H565" stroke="#2e2e2e" stroke-width="2.2" stroke-linecap="round"/>
<line x1="290" y1="160" x2="290" y2="189" stroke="#d4d4d4" stroke-width="1.3"/>
<path d="M609 131 Q607 121 611.5 120.5 Q616 120.5 615 127" fill="none" stroke="#1f8a55" stroke-width="3"/>
<path d="M606.5 131 L611 138.5 L616.5 131 L613.5 131 L613.5 127 L610 127 L610 131 Z" fill="#1f8a55"/>
<path d="M617 128 L622 122.5 L627.5 127.5 L622 133 Z" fill="#2a9d90"/>
<path d="M640 129.5 L644.0 133.5 L648 129.5" fill="none" stroke="#333" stroke-width="2.3"/>
<path d="M607 164 H613 V167 H610 V180 H613 V183.5 H607 Z" fill="#3d4a4a"/>
<rect x="607" y="174" width="6" height="9.5" fill="#1d8a7a"/>
<path d="M620 164 H626.5 V170 H624 V167 H620 Z M620 183.5 H626.5 V177 H624 V180.5 H620 Z" fill="#333"/>
<path d="M614.5 174 Q616 168 620.5 169 Q624 171 622 176 L618 180 Q616 176 614.5 174 Z" fill="#a08a35"/>
<path d="M640 173.5 L644.0 177.5 L648 173.5" fill="none" stroke="#333" stroke-width="2.3"/>
<rect x="690.8" y="119.8" width="20.6" height="19.4" fill="#fafafa" stroke="#4a4a4a" stroke-width="1.4"/>
<path d="M691 125 H711 M697.5 120 V125 M704.5 120 V125" stroke="#4a4a4a" stroke-width="1.1"/>
<path d="M692 127 H710" stroke="#6cc04a" stroke-width="1.6"/>
<path d="M692 129.5 H711 M691.5 129.5 V139" stroke="#555" stroke-width="1"/>
<rect x="693" y="132" width="3.5" height="3" fill="#7b4aa0"/><rect x="698" y="131.5" width="7" height="4" fill="#2fb0d8"/><path d="M705 136 L710 131" stroke="#d8663a" stroke-width="1.4"/>
<rect x="690.8" y="161.5" width="20.6" height="20.4" fill="#fafafa" stroke="#4a4a4a" stroke-width="1.4"/>
<path d="M694 170 L700 165.5 L707 172 L706 178 L699 180 L694 174 Z" fill="#2f7fd8"/><path d="M696 167 L699 164.5 L702 166" stroke="#d8663a" stroke-width="1.6" fill="none"/>
<path d="M803 129 L806.5 132.5 L810 129" fill="none" stroke="#777" stroke-width="1.5"/>
<path d="M842 170.5 L845.75 174.25 L849.5 170.5" fill="none" stroke="#777" stroke-width="1.5"/>
<path d="M1085.5 126.5 L1089.5 130.5 L1093.5 126.5" fill="none" stroke="#777" stroke-width="1.6"/>
<line x1="1020.5" y1="160" x2="1020.5" y2="188" stroke="#d4d4d4" stroke-width="1.3"/>
<path d="M1102.5 98 V103 H1100" stroke="#6a8fc0" stroke-width="1" fill="none"/>
<path d="M927.8 177.4 H933.8" stroke="#333" stroke-width="2.2"/>
<path d="M992 172.5 Q992 167.6 997.3 167.6 Q1003 167.6 1003 172.4 Q1003 176.2 999 177.5 L998.6 179.2 L996.2 179.2 L996 176 Q998.8 175.2 998.8 173 Q998.8 171 997.2 171 Q995.6 171 995.6 172.8 Z" fill="#222"/><circle cx="997.4" cy="182.2" r="1.5" fill="#222"/>
<circle cx="994" cy="172.6" r="2.2" fill="#222"/>
<path d="M1033 169.5 L1038.5 165.5 L1044.5 169.5 L1038.5 173.2 Z" fill="#2f6fb5"/>
<text x="1046.5" y="174.5" font-family="Liberation Serif" font-size="14.5" font-weight="700" fill="#2a5f9c">3</text>
<g fill="none" stroke="#222" stroke-width="1.8"><ellipse cx="1040.3" cy="180.6" rx="3.6" ry="3.6"/><ellipse cx="1048.3" cy="180.6" rx="3.6" ry="3.6"/></g>
<g fill="none" stroke="#222" stroke-width="2"><path d="M1081.5 165.6 Q1089.3 165.2 1089.3 169.6 Q1089.3 174 1081.5 173.8"/><path d="M1081.5 176.4 Q1089.3 176 1089.3 180.4 Q1089.3 184.6 1081.5 184.4"/><path d="M1076.5 164.8 L1073.2 170 Q1072.2 172.6 1075.8 172.6 Q1079.6 172.6 1078.8 169.8"/><path d="M1070 175.3 H1080.5"/><ellipse cx="1075" cy="180.4" rx="4.3" ry="3.9"/></g>
<path d="M150.5 222 H160 L155.25 228 Z" fill="#333"/>
<path d="M175 224.7 H186" stroke="#cfcfcf" stroke-width="1.5"/><path d="M178 222.5 L180.5 220 L183 222.5 M178 227 L180.5 229.5 L183 227" fill="none" stroke="#dedede" stroke-width="1"/>
<path d="M211 219 L224 232 M224 219 L211 232" stroke="#444" stroke-width="1.8"/>
<path d="M247 224.5 L253 231 L264 219" fill="none" stroke="#7a7a7a" stroke-width="1.8"/>
<text x="285.5" y="232" font-family="Liberation Sans" font-size="18" fill="#222">&amp;</text><path d="M286 234 H298" stroke="#333" stroke-width="1.2"/><path d="M295 229 L297 232 L301 225" stroke="#333" stroke-width="1.3" fill="none"/>
<path d="M1168 222 H1180 L1174 228.5 Z" fill="#555"/>
<circle cx="40" cy="705" r="1.6" fill="#333"/>
<circle cx="40" cy="712" r="1.6" fill="#333"/>
<circle cx="40" cy="719" r="1.6" fill="#333"/>
<path d="M88 703.5 H93" stroke="#444" stroke-width="1.5"/><path d="M89 713 H93 M89 721 H93" stroke="#444" stroke-width="2"/>
<path d="M438.5 712.5 H453 M445.75 705.5 V719.5" stroke="#444" stroke-width="2.2"/>
<g fill="none" stroke="#fff" stroke-width="1.6"><rect x="743" y="743" width="22" height="21"/><path d="M750.3 743 V764 M757.6 743 V764 M743 750 H765 M743 757 H765"/></g>
<g fill="none" stroke="#555" stroke-width="1.5"><rect x="804" y="740.5" width="23" height="24" rx="2"/><path d="M812 747 V758 M816 744 V761 M821 744 V761 M816 744 H823"/></g>
<g fill="none" stroke="#555" stroke-width="1.5"><rect x="868" y="742.5" width="23" height="22.5"/><path d="M879.5 742.5 V765 M868 753.5 H891"/></g>
<circle cx="916" cy="754" r="1.5" fill="#555"/><circle cx="922" cy="754" r="1.5" fill="#555"/>
<path d="M1082 754 H1096 M1089 747 V761" stroke="#555" stroke-width="2.4"/></svg>
</body></html>
